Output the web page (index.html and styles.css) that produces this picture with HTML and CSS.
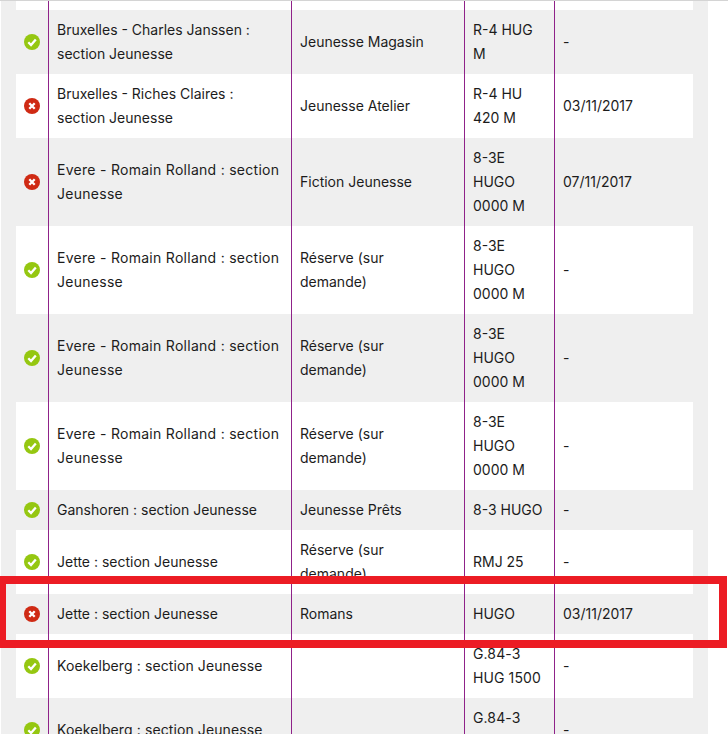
FILE: index.html
```html
<!DOCTYPE html>
<html lang="fr">
<head>
<meta charset="utf-8">
<title>Disponibilité</title>
<link rel="stylesheet" href="styles.css">
</head>
<body>
<svg class="defs" width="0" height="0" aria-hidden="true">
  <symbol id="ok" viewBox="0 0 16 16">
    <circle cx="8" cy="8" r="8" fill="#95c711"/>
    <path d="M4.3 8.3 7 11 11.8 5.4" fill="none" stroke="#fff" stroke-width="2.3"/>
  </symbol>
  <symbol id="no" viewBox="0 0 16 16">
    <circle cx="8" cy="8" r="8" fill="#cf2a14"/>
    <path d="M5.3 5.3 10.7 10.7M10.7 5.3 5.3 10.7" fill="none" stroke="#fff" stroke-width="2.3"/>
  </symbol>
</svg>
<main class="panel">
  <table class="holdings">
    <colgroup>
      <col class="c-status"><col class="c-lib"><col class="c-loc"><col class="c-call"><col class="c-date">
    </colgroup>
    <tbody>
      <tr class="stub"><td></td><td></td><td></td><td></td><td></td></tr>
      <tr>
        <td class="status"><svg class="icon"><use href="#ok"/></svg></td>
        <td>Bruxelles - Charles Janssen :<br>section Jeunesse</td>
        <td>Jeunesse Magasin</td>
        <td>R-4 HUG<br>M</td>
        <td>-</td>
      </tr>
      <tr>
        <td class="status"><svg class="icon"><use href="#no"/></svg></td>
        <td>Bruxelles - Riches Claires :<br>section Jeunesse</td>
        <td>Jeunesse Atelier</td>
        <td>R-4 HU<br>420 M</td>
        <td>03/11/2017</td>
      </tr>
      <tr>
        <td class="status"><svg class="icon"><use href="#no"/></svg></td>
        <td class="wide">Evere - Romain Rolland : section<br>Jeunesse</td>
        <td>Fiction Jeunesse</td>
        <td>8-3E<br>HUGO<br>0000 M</td>
        <td>07/11/2017</td>
      </tr>
      <tr>
        <td class="status"><svg class="icon"><use href="#ok"/></svg></td>
        <td class="wide">Evere - Romain Rolland : section<br>Jeunesse</td>
        <td>Réserve (sur<br>demande)</td>
        <td>8-3E<br>HUGO<br>0000 M</td>
        <td>-</td>
      </tr>
      <tr>
        <td class="status"><svg class="icon"><use href="#ok"/></svg></td>
        <td class="wide">Evere - Romain Rolland : section<br>Jeunesse</td>
        <td>Réserve (sur<br>demande)</td>
        <td>8-3E<br>HUGO<br>0000 M</td>
        <td>-</td>
      </tr>
      <tr>
        <td class="status"><svg class="icon"><use href="#ok"/></svg></td>
        <td class="wide">Evere - Romain Rolland : section<br>Jeunesse</td>
        <td>Réserve (sur<br>demande)</td>
        <td>8-3E<br>HUGO<br>0000 M</td>
        <td>-</td>
      </tr>
      <tr>
        <td class="status"><svg class="icon"><use href="#ok"/></svg></td>
        <td>Ganshoren : section Jeunesse</td>
        <td>Jeunesse Prêts</td>
        <td>8-3 HUGO</td>
        <td>-</td>
      </tr>
      <tr>
        <td class="status"><svg class="icon"><use href="#ok"/></svg></td>
        <td>Jette : section Jeunesse</td>
        <td>Réserve (sur<br>demande)</td>
        <td>RMJ 25</td>
        <td>-</td>
      </tr>
      <tr>
        <td class="status"><svg class="icon"><use href="#no"/></svg></td>
        <td>Jette : section Jeunesse</td>
        <td>Romans</td>
        <td>HUGO</td>
        <td>03/11/2017</td>
      </tr>
      <tr>
        <td class="status"><svg class="icon"><use href="#ok"/></svg></td>
        <td class="snug">Koekelberg : section Jeunesse</td>
        <td></td>
        <td class="snug">G.84-3<br>HUG 1500</td>
        <td>-</td>
      </tr>
      <tr>
        <td class="status"><svg class="icon"><use href="#ok"/></svg></td>
        <td class="snug">Koekelberg : section Jeunesse</td>
        <td></td>
        <td class="snug">G.84-3<br>HUG 1500</td>
        <td>-</td>
      </tr>
    </tbody>
  </table>
</main>
<div class="highlight"></div>
</body>
</html>
```

FILE: styles.css
```css
html, body {
  margin: 0;
  height: 100%;
  overflow: hidden;
  background: #fff;
}
body {
  position: relative;
  font-family: "Inter", "Liberation Sans", sans-serif;
  font-size: 14px;
  line-height: 24px;
  color: #1c1c1c;
}
body::before {
  content: "";
  position: absolute;
  left: 0;
  right: 0;
  top: 0;
  height: 1px;
  background: #d4d4d4;
}
.defs {
  position: absolute;
}
.panel {
  width: 677px;
  margin-left: 1px;
  padding: 0 15px;
  background: #efefef;
}
.holdings {
  width: 677px;
  table-layout: fixed;
  border-collapse: separate;
  border-spacing: 0;
  background: #fff;
}
.c-status { width: 33px; }
.c-lib { width: 243px; }
.c-loc { width: 173px; }
.c-call { width: 90px; }
.c-date { width: 138px; }
.holdings td {
  padding: 8px;
  vertical-align: middle;
  border-right: 1px solid #8f2289;
}
.holdings td:last-child {
  border-right: 0;
}
.holdings tr:nth-child(even) td {
  background: #efefef;
}
.holdings .stub td {
  height: 10px;
  padding: 0;
}
.holdings .status {
  padding: 0;
  text-align: center;
}
.holdings .wide {
  letter-spacing: 0.28px;
}
.holdings .snug {
  letter-spacing: 0.1px;
}
.icon {
  display: block;
  width: 16px;
  height: 16px;
  margin: 0 auto;
}
.highlight {
  position: absolute;
  left: -2px;
  top: 576px;
  width: 713px;
  height: 56px;
  border: 8px solid #ec1c24;
}
```
